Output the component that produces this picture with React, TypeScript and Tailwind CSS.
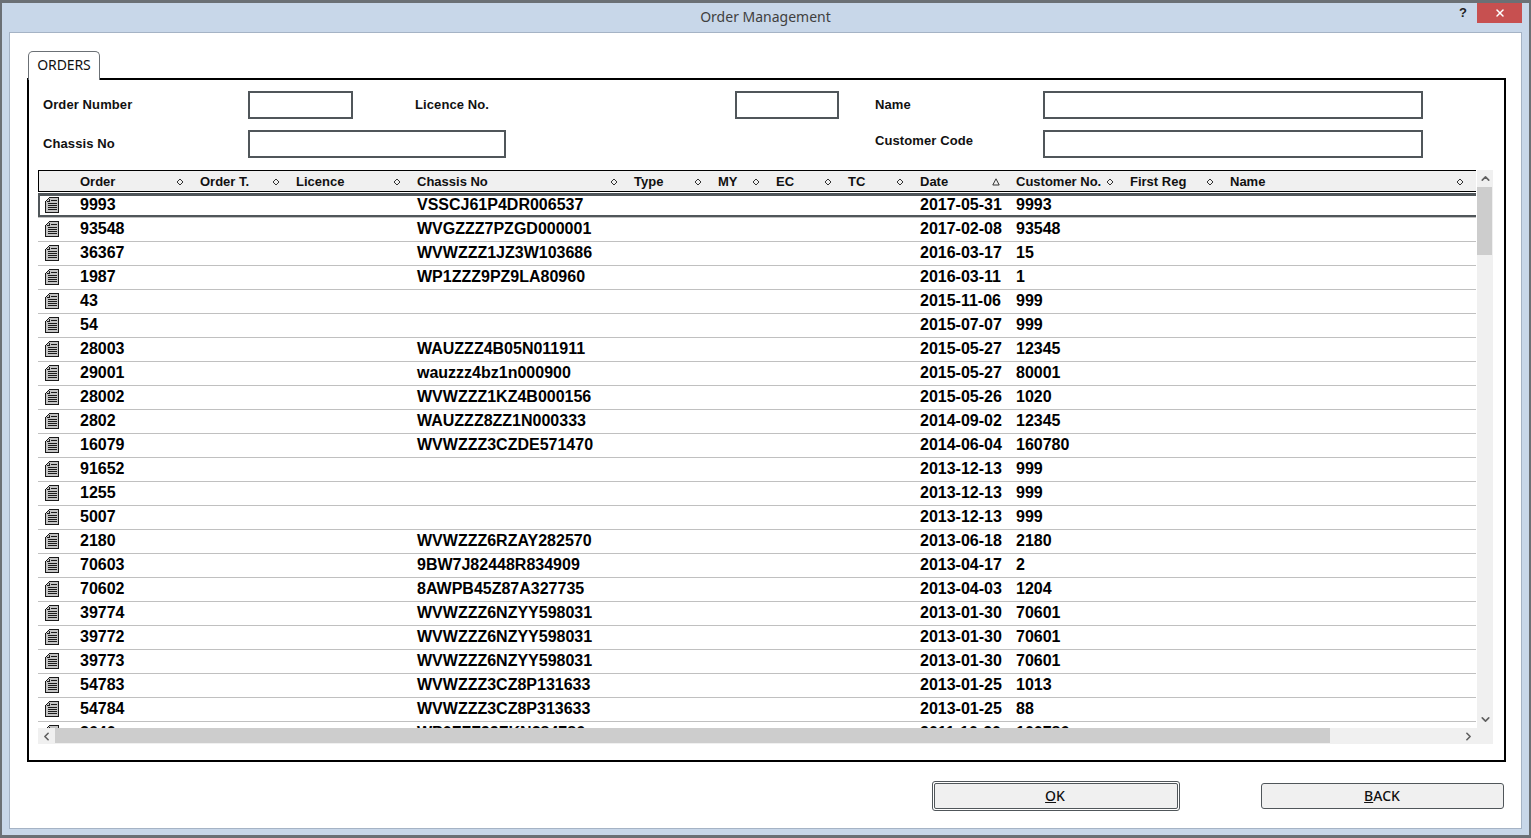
import { X, ChevronUp, ChevronDown, ChevronLeft, ChevronRight } from "lucide-react";

const columns = [
  { title: "Order T.", sort: "none", last: false },
  { title: "Licence", sort: "none", last: false },
  { title: "Chassis No", sort: "none", last: false },
  { title: "Type", sort: "none", last: false },
  { title: "MY", sort: "none", last: false },
  { title: "EC", sort: "none", last: false },
  { title: "TC", sort: "none", last: false },
  { title: "Date", sort: "asc", last: false },
  { title: "Customer No.", sort: "none", last: false },
  { title: "First Reg", sort: "none", last: false },
  { title: "Name", sort: "none", last: true },
];

const orders = [
  ["9993", "VSSCJ61P4DR006537", "2017-05-31", "9993"],
  ["93548", "WVGZZZ7PZGD000001", "2017-02-08", "93548"],
  ["36367", "WVWZZZ1JZ3W103686", "2016-03-17", "15"],
  ["1987", "WP1ZZZ9PZ9LA80960", "2016-03-11", "1"],
  ["43", "", "2015-11-06", "999"],
  ["54", "", "2015-07-07", "999"],
  ["28003", "WAUZZZ4B05N011911", "2015-05-27", "12345"],
  ["29001", "wauzzz4bz1n000900", "2015-05-27", "80001"],
  ["28002", "WVWZZZ1KZ4B000156", "2015-05-26", "1020"],
  ["2802", "WAUZZZ8ZZ1N000333", "2014-09-02", "12345"],
  ["16079", "WVWZZZ3CZDE571470", "2014-06-04", "160780"],
  ["91652", "", "2013-12-13", "999"],
  ["1255", "", "2013-12-13", "999"],
  ["5007", "", "2013-12-13", "999"],
  ["2180", "WVWZZZ6RZAY282570", "2013-06-18", "2180"],
  ["70603", "9BW7J82448R834909", "2013-04-17", "2"],
  ["70602", "8AWPB45Z87A327735", "2013-04-03", "1204"],
  ["39774", "WVWZZZ6NZYY598031", "2013-01-30", "70601"],
  ["39772", "WVWZZZ6NZYY598031", "2013-01-30", "70601"],
  ["39773", "WVWZZZ6NZYY598031", "2013-01-30", "70601"],
  ["54783", "WVWZZZ3CZ8P131633", "2013-01-25", "1013"],
  ["54784", "WVWZZZ3CZ8P313633", "2013-01-25", "88"],
  ["3640", "WP0ZZZ99ZKN384786", "2011-10-20", "100786"],
];

const gridCols =
  "grid grid-cols-[42px_120px_96px_121px_217px_84px_58px_72px_72px_96px_114px_100px_246px]";

const SortIcon = ({ sort }: { sort: string }) => (
  <svg width="8" height="8" viewBox="0 0 8 8" className="shrink-0" fill="none" stroke="#333" strokeWidth="1">
    {sort === "asc" ? <path d="M4 .8 7.2 7H.8Z" /> : <path d="M4 1 7 4 4 7 1 4Z" />}
  </svg>
);

const DocIcon = () => (
  <svg width="14" height="16" viewBox="0 0 14 16" className="block shrink-0" shapeRendering="crispEdges">
    <path d="M4.5.5h9v15H.5V4.5Z" fill="#c4c4c4" stroke="#1a1a1a" />
    <path d="M4.5 1.5v3h-3" fill="none" stroke="#1a1a1a" />
    <path d="M6 3.5h6M3 6.5h9M3 8.5h9M3 10.5h9M3 12.5h9" stroke="#1a1a1a" />
  </svg>
);

const Field = ({ className }: { className: string }) => (
  <div className={`h-[28px] border-2 border-[#50565a] bg-white ${className}`} />
);

const App = () => {
  return (
    <div className="flex h-[838px] w-[1531px] flex-col overflow-hidden border-x-2 border-t-[3px] border-b-[3px] border-[#6b7075] bg-[#c8d7e9] font-['Liberation_Sans',sans-serif] text-black">
      {/* Title bar */}
      <div className="grid h-[29px] shrink-0 grid-cols-[1fr_auto_1fr]">
        <div />
        <div className="pt-[4px] font-['Noto_Sans',sans-serif] text-[14px] leading-[20px] text-[#404040]">Order Management</div>
        <div className="flex items-start justify-end pr-[7px]">
          <span className="mr-[10px] text-[13px] leading-[20px] font-bold text-[#222]">?</span>
          <div className="flex h-[20px] w-[45px] items-center justify-center bg-[#c75050]">
            <X size={12} strokeWidth={3} className="text-white" />
          </div>
        </div>
      </div>

      <div className="mx-[7px] mb-[6px] flex flex-1 flex-col border border-[#a5b3c5] bg-white pt-[18px] pl-[17px]">
        {/* Tab */}
        <div className="relative z-10 -mb-[2px] ml-px flex h-[29px] w-[72px] items-center justify-center rounded-t-[5px] border border-b-0 border-[#6b7075] bg-white pb-[4px] font-['Noto_Sans',sans-serif] text-[14px] tracking-[-0.1px] text-[#111]">
          ORDERS
        </div>

        <div className="flex h-[684px] w-[1479px] flex-col border-2 border-black">
          {/* Search form */}
          <div className="flex flex-col gap-[11px] pt-[11px] pl-[14px] text-[13px] font-bold tracking-[0.1px] text-[#111]">
            <div className="flex h-[28px] items-center">
              <span className="w-[205px]">Order Number</span>
              <Field className="w-[105px]" />
              <span className="ml-[62px] w-[320px]">Licence No.</span>
              <Field className="w-[104px]" />
              <span className="ml-[36px] w-[168px]">Name</span>
              <Field className="w-[380px]" />
            </div>
            <div className="flex h-[28px] items-center">
              <span className="w-[205px]">Chassis No</span>
              <Field className="w-[258px]" />
              <span className="ml-[369px] w-[168px] -translate-y-[3px]">Customer Code</span>
              <Field className="w-[380px]" />
            </div>
          </div>

          {/* Orders table */}
          <div className="mt-[12px] ml-[9px] flex h-[574px] w-[1455px] flex-col">
            <div className="flex min-h-0 flex-1">
              <div className="flex w-[1439px] flex-col overflow-hidden">
                <div className={`${gridCols} h-[22px] shrink-0 items-center border-y border-black bg-[#f0f0f0] pt-px text-[13px] leading-[18px] font-bold text-[#111] shadow-[inset_1px_0_0_#000]`}>
                  <div />
                  <div className="flex items-center justify-between pr-[16px]">
                    <span>Order</span>
                    <SortIcon sort="none" />
                  </div>
                  {columns.map((col) => (
                    <div key={col.title} className={col.last ? "flex items-center justify-between pr-[12px]" : "flex items-center justify-between pr-[16px]"}>
                      <span>{col.title}</span>
                      <SortIcon sort={col.sort} />
                    </div>
                  ))}
                </div>
                <div className="mt-px flex-1 overflow-hidden">
                  {orders.map((row, index) => (
                    <div
                      key={row[0]}
                      className={
                        index === 0
                          ? `${gridCols} mb-px h-[24px] items-center border-t-[3px] border-b-[2px] border-[#50565a] pb-[2px] text-[16px] leading-[17px] font-bold shadow-[inset_2px_0_0_#50565a,0_1px_0_#c0c0c0]`
                          : `${gridCols} h-[24px] items-center border-b border-[#c0c0c0] pb-px text-[16px] leading-[20px] font-bold`
                      }
                    >
                      <div className="pl-[7px]">
                        <DocIcon />
                      </div>
                      <div>{row[0]}</div>
                      <div />
                      <div />
                      <div>{row[1]}</div>
                      <div />
                      <div />
                      <div />
                      <div />
                      <div>{row[2]}</div>
                      <div>{row[3]}</div>
                      <div />
                      <div />
                    </div>
                  ))}
                </div>
              </div>
              {/* Vertical scrollbar */}
              <div className="ml-px flex w-[16px] flex-col bg-[#f0f0f0]">
                <div className="flex h-[17px] items-center justify-center text-[#606060]">
                  <ChevronUp size={13} strokeWidth={3} />
                </div>
                <div className="h-[68px] w-[15px] bg-[#cdcdcd]" />
                <div className="flex-1" />
                <div className="flex h-[17px] items-center justify-center text-[#606060]">
                  <ChevronDown size={13} strokeWidth={3} />
                </div>
              </div>
            </div>
            {/* Horizontal scrollbar */}
            <div className="flex h-[16px] shrink-0 bg-[#f0f0f0]">
              <div className="flex w-[17px] items-center justify-center text-[#606060]">
                <ChevronLeft size={13} strokeWidth={3} />
              </div>
              <div className="h-[15px] w-[1275px] bg-[#cdcdcd]" />
              <div className="flex-1" />
              <div className="flex w-[33px] items-center justify-start pl-[2px] text-[#606060]">
                <ChevronRight size={13} strokeWidth={3} />
              </div>
            </div>
          </div>
        </div>

        {/* Buttons */}
        <div className="flex items-center pt-[19px] font-['Noto_Sans',sans-serif] text-[14px] font-medium text-[#111]">
          <button className="ml-[905px] flex h-[30px] w-[248px] items-center justify-center rounded-[3px] border border-[#50565a] bg-white p-px">
            <span className="flex h-full w-full items-center justify-center rounded-[2px] border border-[#50565a] bg-[#f0f0f0] pr-[2px] pb-[2px]">
              <span><span className="underline">O</span>K</span>
            </span>
          </button>
          <button className="ml-[81px] flex h-[26px] w-[243px] items-center justify-center rounded-[3px] border border-[#50565a] bg-[#f0f0f0] pr-[1px] pb-[2px]">
            <span><span className="underline">B</span>ACK</span>
          </button>
        </div>
      </div>
    </div>
  );
};

export default App;
